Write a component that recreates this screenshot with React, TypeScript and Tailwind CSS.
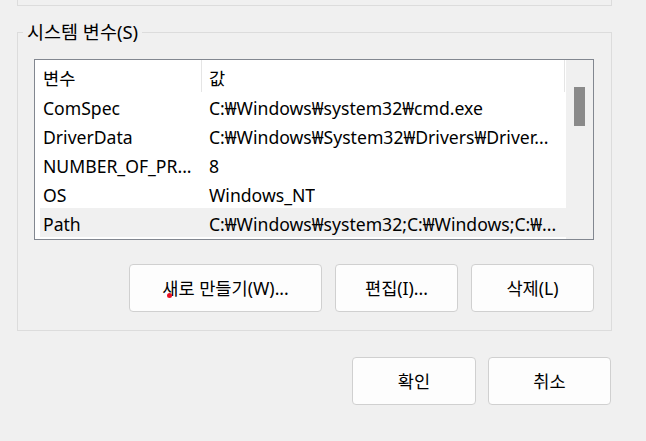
const rows = [
  { name: "ComSpec", value: "C:₩Windows₩system32₩cmd.exe" },
  { name: "DriverData", value: "C:₩Windows₩System32₩Drivers₩Driver..." },
  { name: "NUMBER_OF_PR...", value: "8" },
  { name: "OS", value: "Windows_NT" },
  { name: "Path", value: "C:₩Windows₩system32;C:₩Windows;C:₩...", selected: true },
];

function Button({ label, className, children }: { label: string; className: string; children?: React.ReactNode }) {
  return (
    <button className={`relative h-[48px] rounded-[4px] border border-[#d0d0d0] bg-[#fdfdfd] text-black ${className}`}>
      {label}
      {children}
    </button>
  );
}

export default function App() {
  return (
    <div
      className="w-[646px] h-[441px] overflow-hidden bg-[#f0f0f0] text-[17.6px] text-black"
      style={{ fontFamily: '"Noto Sans", "Noto Sans CJK KR", sans-serif' }}
    >
      {/* bottom of the user variables box above */}
      <div className="ml-[17px] w-[595px] h-[6px] border-x border-b border-[#dcdcdc]" />

      <fieldset className="ml-[17px] mt-[14px] w-[595px] h-[311px] border border-[#dcdcdc]">
        <legend className="ml-[5px] px-[4px] leading-[24px] text-[18.5px]">시스템 변수(S)</legend>

        <div className="pl-[16px] pt-[15px]">
          {/* list view */}
          <div className="flex w-[560px] h-[181px] border border-[#828790] bg-white">
            <div className="w-[531px] flex flex-col">
              <div className="flex h-[32px] items-center border-r border-[#e5e5e5] mr-[1px]">
                <div className="w-[167px] h-full pl-[8px] pt-[5px] flex items-center border-r border-[#e5e5e5]">변수</div>
                <div className="pl-[7px] pt-[5px]">값</div>
              </div>
              {rows.map((r) => (
                <div
                  key={r.name}
                  className={`ml-[5px] flex h-[29px] items-center whitespace-nowrap ${r.selected ? "bg-[#f0f0f0]" : ""}`}
                >
                  <div className="w-[166px] pl-[3px] pt-[3px] overflow-hidden">{r.name}</div>
                  <div className="pl-[3px] pt-[3px] overflow-hidden">{r.value}</div>
                </div>
              ))}
            </div>
            {/* scrollbar */}
            <div className="w-[27px] bg-[#f0f0f0] pl-[8px] pt-[27px]">
              <div className="w-[11px] h-[39px] bg-[#8a8a8a]" />
            </div>
          </div>

          <div className="flex gap-[13px] justify-end w-[560px] mt-[24px]">
            <Button label="새로 만들기(W)..." className="w-[193px]">
              <span className="absolute left-[37px] top-[28px] w-[5px] h-[5px] rounded-full bg-[#e81123]" />
            </Button>
            <Button label="편집(I)..." className="w-[123px]" />
            <Button label="삭제(L)" className="w-[123px]" />
          </div>
        </div>
      </fieldset>

      <div className="flex justify-end gap-[12px] w-[611px] mt-[26px]">
        <Button label="확인" className="w-[124px]" />
        <Button label="취소" className="w-[123px]" />
      </div>
    </div>
  );
}
